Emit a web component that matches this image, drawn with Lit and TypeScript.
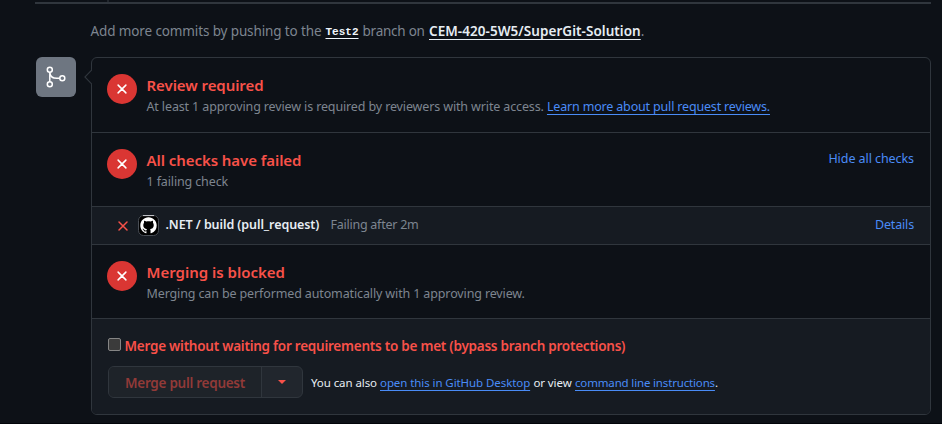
import { LitElement, html, css, nothing } from "lit";
import { customElement, property } from "lit/decorators.js";

@customElement("status-circle")
class StatusCircle extends LitElement {
  static styles = css`
    :host { display: block; flex: none; width: 30px; height: 30px; }
    .disc { display: flex; align-items: center; justify-content: center; width: 30px; height: 30px; border-radius: 50%; background: #da3633; }
    svg { display: block; }
  `;
  render() {
    return html`<div class="disc">
      <svg width="16" height="16" viewBox="0 0 16 16" fill="none" stroke="#fff" stroke-width="1.5" stroke-linecap="round"><path d="M4.1 4.1l7.8 7.8M11.9 4.1l-7.8 7.8" /></svg>
    </div>`;
  }
}

@customElement("merge-status")
class MergeStatus extends LitElement {
  @property() heading = "";
  @property() tone = "";
  @property() action = "";
  static styles = css`
    :host { display: block; }
    .item { display: flex; align-items: flex-start; box-sizing: border-box; height: 74px; padding: 16px 16px 0 15px; gap: 9.5px; border-bottom: 1px solid #30363d; }
    :host(.first) .item { height: 75px; }
    .body { flex: 1; padding-top: 1px; white-space: nowrap; }
    .title { font-size: 15px; line-height: 20px; font-weight: 600; color: #f85149; }
    .title.review { letter-spacing: -0.06px; }
    .title.checks { letter-spacing: -0.06px; }
    .sub { margin-top: 2px; font-size: 12.5px; line-height: 20px; letter-spacing: -0.13px; color: #7d8590; }
    .action { font-size: 12.5px; line-height: 20px; letter-spacing: -0.07px; color: #4a8cf7; white-space: nowrap; }
  `;
  render() {
    return html`<div class="item">
      <status-circle></status-circle>
      <div class="body">
        <div class="title ${this.tone}">${this.heading}</div>
        <div class="sub"><slot></slot></div>
      </div>
      ${this.action ? html`<div class="action">${this.action}</div>` : nothing}
    </div>`;
  }
}

@customElement("app-root")
class AppRoot extends LitElement {
  static styles = css`
    :host { display: block; width: 942px; height: 424px; overflow: hidden; background: #0d1117; color: #7d8590; font-family: "Noto Sans", "Open Sans", sans-serif; white-space: nowrap; }
    .page { box-sizing: border-box; height: 424px; padding: 0 11px 0 35px; border-bottom: 1px solid #010409; }
    .rail { width: 2px; height: 2px; margin-left: 72px; background: #21262d; }
    .rule { height: 2px; width: 896px; background: #30363d; }
    .hint { display: flex; margin: 17px 0 0 55.5px; font-size: 13.5px; line-height: 21px; }
    .hint .lead { width: 235px; letter-spacing: -0.12px; }
    .hint .on { margin-left: 4px; width: 66.5px; letter-spacing: -0.24px; }
    .branch { width: 33px; font: 700 11px/21px "Liberation Mono", monospace; position: relative; top: 1px; color: #f0f6fc; text-decoration: underline; text-underline-offset: 3px; text-decoration-thickness: 1px; }
    .repo { font-weight: 600; color: #e6edf3; letter-spacing: 0.05px; text-decoration: underline; text-underline-offset: 3px; text-decoration-thickness: 1px; }
    .timeline { display: flex; margin: 15px 0 0 1px; }
    .badge { display: block; flex: none; width: 40px; height: 40px; border-radius: 6px; background: #6e7681; }
    .box { position: relative; box-sizing: border-box; width: 840px; height: 358px; margin-left: 15px; border: 1px solid #30363d; border-radius: 6px; }
    .caret { position: absolute; left: -8px; top: 11px; }
    a { color: #4a8cf7; text-decoration: underline; text-decoration-thickness: 1px; text-underline-offset: 3px; }
    .learn { letter-spacing: -0.17px; }
    .check { display: flex; align-items: flex-start; box-sizing: border-box; height: 38px; padding: 8px 16px 0 23px; background: #161b22; border-bottom: 1px solid #30363d; font-size: 12.5px; line-height: 20px; }
    .fail { margin-top: 3px; }
    .avatar { margin: 0 0 0 6.5px; }
    .name { width: 157px; margin-left: 7px; font-weight: 600; color: #e6edf3; letter-spacing: -0.08px; }
    .when { margin-left: 8px; letter-spacing: -0.25px; flex: 1; }
    .details { color: #4a8cf7; letter-spacing: -0.15px; }
    .footer { box-sizing: border-box; height: 95px; padding: 17px 16px 0; background: #161b22; border-radius: 0 0 5px 5px; }
    .bypass { display: flex; font-size: 13.5px; font-weight: 600; line-height: 20px; letter-spacing: -0.24px; color: #f85149; }
    .tick { box-sizing: border-box; width: 13px; height: 13px; margin: 2px 3.5px 0 0; border: 1px solid #858585; border-radius: 2px; background: #3b3b3b; }
    .actions { display: flex; align-items: center; margin-top: 10px; }
    .split { display: flex; box-sizing: border-box; width: 195px; height: 32px; border: 1px solid #30363d; border-radius: 6px; background: #21262d; overflow: hidden; }
    .merge { box-sizing: border-box; width: 153px; padding: 1px 0 0 16px; border-right: 1px solid #30363d; background: #1e2329; color: #913a38; font-size: 13.5px; font-weight: 600; line-height: 30px; letter-spacing: -0.27px; }
    .drop { flex: 1; display: flex; align-items: center; justify-content: center; }
    .or { display: flex; margin-left: 8px; padding-top: 2px; font-size: 11.5px; line-height: 20px; color: #e6edf3; letter-spacing: -0.08px; }
    .or .also { width: 69px; }
    .or .desk { width: 150px; }
    .or .view { width: 45px; text-align: center; }
    .or .cmd { width: 140px; letter-spacing: -0.16px; }
  `;
  render() {
    return html`<div class="page">
      <div class="rail"></div>
      <div class="rule"></div>
      <div class="hint">
        <span class="lead">Add more commits by pushing to the</span><span class="branch">Test2</span><span class="on">branch on</span><span class="repo">CEM-420-5W5/SuperGit-Solution</span><span>.</span>
      </div>
      <div class="timeline">
        <svg class="badge" viewBox="0 0 40 40" fill="none" stroke="#fff" stroke-width="1.5">
          <circle cx="13.8" cy="12.8" r="2.5" /><circle cx="13.8" cy="27.3" r="2.5" /><circle cx="26.3" cy="21.3" r="2.5" />
          <path d="M13.8 15.3v9.5M13.8 15.3c.4 3.8 3.2 6 7 6h3" />
        </svg>
        <div class="box">
          <svg class="caret" width="9" height="16" viewBox="0 0 9 16"><path d="M8 .8L1 8l7 7.2h1V.8z" fill="#0d1117" /><path d="M7.8.8L.9 8l6.9 7.2" fill="none" stroke="#30363d" stroke-width="1.1" /></svg>
          <merge-status class="first" tone="review" heading="Review required">At least 1 approving review is required by reviewers with write access. <a class="learn">Learn more about pull request reviews.</a></merge-status>
          <merge-status tone="checks" heading="All checks have failed" action="Hide all checks">1 failing check</merge-status>
          <div class="check">
            <svg class="fail" width="16" height="16" viewBox="0 0 16 16" fill="none" stroke="#f85149" stroke-width="1.5" stroke-linecap="round"><path d="M4 4l8 8M12 4l-8 8" /></svg>
            <svg class="avatar" width="21" height="21" viewBox="0 0 21 21">
              <rect x=".5" y=".5" width="20" height="20" rx="5" fill="#000" stroke="#484d54" />
              <path d="M5 .6h11" stroke="#c9ccd0" />
              <path transform="translate(2.3 2.3) scale(1.025)" fill="#fff" d="M8 0C3.58 0 0 3.58 0 8c0 3.54 2.29 6.53 5.47 7.59.4.07.55-.17.55-.38 0-.19-.01-.82-.01-1.49-2.01.37-2.53-.49-2.69-.94-.09-.23-.48-.94-.82-1.13-.28-.15-.68-.52-.01-.53.63-.01 1.08.58 1.23.82.72 1.21 1.87.87 2.33.66.07-.52.28-.87.51-1.07-1.78-.2-3.64-.89-3.64-3.95 0-.87.31-1.59.82-2.15-.08-.2-.36-1.02.08-2.12 0 0 .67-.21 2.2.82.64-.18 1.32-.27 2-.27s1.36.09 2 .27c1.53-1.04 2.2-.82 2.2-.82.44 1.1.16 1.92.08 2.12.51.56.82 1.27.82 2.15 0 3.07-1.87 3.75-3.65 3.95.29.25.54.73.54 1.48 0 1.07-.01 1.93-.01 2.2 0 .21.15.46.55.38A8.01 8.01 0 0016 8c0-4.42-3.58-8-8-8z" />
            </svg>
            <span class="name">.NET / build (pull_request)</span>
            <span class="when">Failing after 2m</span>
            <span class="details">Details</span>
          </div>
          <merge-status heading="Merging is blocked">Merging can be performed automatically with 1 approving review.</merge-status>
          <div class="footer">
            <div class="bypass"><span class="tick"></span><span>Merge without waiting for requirements to be met (bypass branch protections)</span></div>
            <div class="actions">
              <div class="split">
                <div class="merge">Merge pull request</div>
                <div class="drop"><svg width="8" height="4" viewBox="0 0 8 4"><path d="M0 0h8L4 4z" fill="#f85149" /></svg></div>
              </div>
              <div class="or"><span class="also">You can also</span><a class="desk">open this in GitHub Desktop</a><span class="view">or view</span><a class="cmd">command line instructions</a><span>.</span></div>
            </div>
          </div>
        </div>
      </div>
    </div>`;
  }
}
